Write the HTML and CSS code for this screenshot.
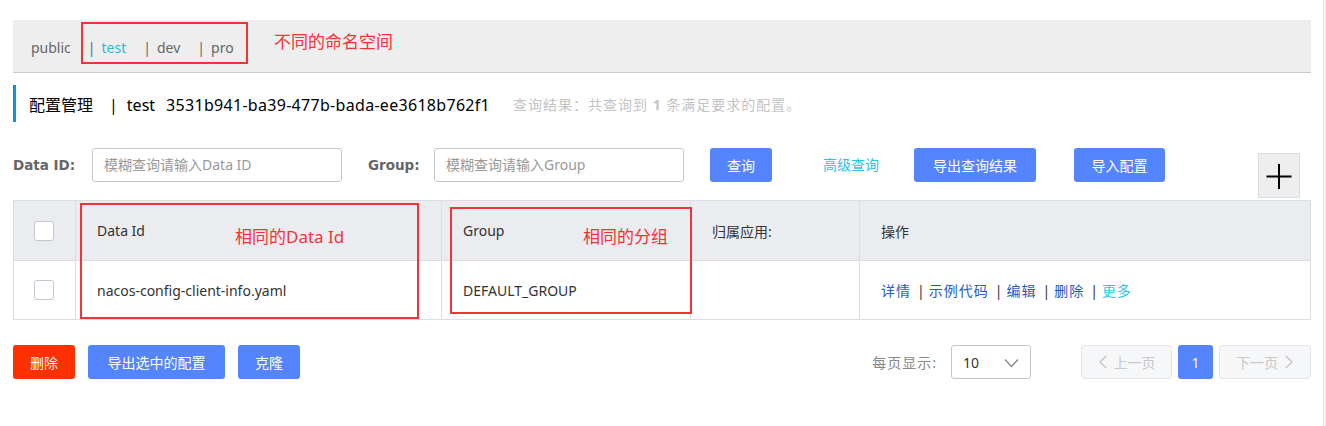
FILE: index.html
```html
<!DOCTYPE html>
<html lang="zh">
<head>
<meta charset="utf-8">
<title>配置管理</title>
<link rel="stylesheet" href="styles.css">
</head>
<body>
<div class="screen">
  <div class="page">
    <div class="ns-bar">
      <span class="ns">public</span>
      <span class="ns active"><i class="sep">|</i>test</span>
      <span class="ns"><i class="sep">|</i>dev</span>
      <span class="ns"><i class="sep">|</i>pro</span>
    </div>

    <div class="title">
      <span class="title-main">配置管理<span class="bar">|</span>test<span class="ns-id">3531b941-ba39-477b-bada-ee3618b762f1</span></span>
      <span class="result">查询结果：共查询到 <b>1</b> 条满足要求的配置。</span>
    </div>

    <div class="search">
      <label class="lbl lbl-id">Data ID:</label>
      <div class="input input-id">模糊查询请输入Data ID</div>
      <label class="lbl lbl-group">Group:</label>
      <div class="input input-group">模糊查询请输入Group</div>
      <button class="btn btn-query">查询</button>
      <span class="adv">高级查询</span>
      <button class="btn btn-export">导出查询结果</button>
      <button class="btn btn-import">导入配置</button>
      <div class="plus">
        <svg width="26" height="26" viewBox="0 0 26 26"><path d="M13 1v25M0.5 13.5h25" stroke="#000" stroke-width="2" fill="none"/></svg>
      </div>
    </div>

    <div class="grid">
      <div class="cell head chk"><span class="box"></span></div>
      <div class="cell head">Data Id</div>
      <div class="cell head">Group</div>
      <div class="cell head">归属应用:</div>
      <div class="cell head">操作</div>

      <div class="cell chk"><span class="box"></span></div>
      <div class="cell">nacos-config-client-info.yaml</div>
      <div class="cell">DEFAULT_GROUP</div>
      <div class="cell"></div>
      <div class="cell ops">
        <a>详情</a><i class="opsep">|</i><a>示例代码</a><i class="opsep">|</i><a>编辑</a><i class="opsep">|</i><a>删除</a><i class="opsep">|</i><a class="more">更多</a>
      </div>
    </div>

    <div class="footer">
      <div class="left-actions">
        <button class="btn btn-del">删除</button>
        <button class="btn btn-exp-sel">导出选中的配置</button>
        <button class="btn btn-clone">克隆</button>
      </div>
      <div class="right-actions">
        <span class="per">每页显示:</span>
        <div class="select">
          <span>10</span>
          <svg width="15" height="10" viewBox="0 0 15 10"><path d="M1 1.5l6.5 7 6.5-7" stroke="#888" stroke-width="1.4" fill="none"/></svg>
        </div>
        <div class="pager">
          <span class="pg pg-prev"><svg width="10" height="14" viewBox="0 0 10 14"><path d="M8.5 0.8L2 7l6.5 6.2" stroke="#c8c8c8" stroke-width="1.5" fill="none"/></svg>上一页</span>
          <span class="pg pg-cur">1</span>
          <span class="pg pg-next">下一页<svg width="10" height="14" viewBox="0 0 10 14"><path d="M1.5 0.8L8 7l-6.5 6.2" stroke="#c8c8c8" stroke-width="1.5" fill="none"/></svg></span>
        </div>
      </div>
    </div>

    <div class="note-box nb-ns"></div>
    <div class="note-text nt-ns">不同的命名空间</div>
    <div class="note-box nb-id"></div>
    <div class="note-text nt-id">相同的Data Id</div>
    <div class="note-box nb-group"></div>
    <div class="note-text nt-group">相同的分组</div>
  </div>
  <div class="spacer"></div>
  <div class="scrollbar"></div>
</div>
</body>
</html>
```

FILE: styles.css
```css
* { box-sizing: border-box; }
html, body { margin: 0; padding: 0; background: #fff; }
body {
  font-family: "Noto Sans", "Noto Sans CJK SC", sans-serif;
  font-size: 14px;
  color: #333;
}
.screen { display: flex; height: 426px; }
.page { position: relative; width: 1311px; padding: 20px 0 0 13px; }
.spacer { flex: 1; }
.scrollbar { width: 3px; background: #f1f1f1; border-left: 1px solid #e4e4e4; }

/* namespace bar */
.ns-bar {
  height: 53px;
  background: #eeeeee;
  border-bottom: 1px solid #cccccc;
  display: flex;
  align-items: center;
  padding: 3px 0 0 18px;
  color: #666;
  font-size: 14px;
}
.ns { margin-right: 17px; }
.ns .sep { font-style: normal; color: #666; margin-right: 6px; }
.ns.active { color: #2fb8de; }

/* title */
.title {
  margin-top: 12px;
  height: 37px;
  border-left: 3px solid #0b96d3;
  display: flex;
  align-items: center;
  padding-left: 13px;
}
.title-main { font-size: 16px; color: #000; }
.title-main .bar { margin: 0 9px 0 16px; }
.title-main .ns-id { margin-left: 11px; letter-spacing: 0.3px; }
.result { margin-left: 23px; font-size: 14px; color: #c4c4c4; letter-spacing: 1px; }
.result b { font-weight: bold; }

/* search */
.search {
  margin-top: 26px;
  height: 34px;
  display: flex;
  align-items: flex-start;
}
.lbl {
  font-family: "DejaVu Sans", sans-serif;
  font-weight: bold;
  font-size: 13.5px;
  color: #666;
  line-height: 34px;
}
.lbl-id { width: 79px; }
.lbl-group { width: 66px; margin-left: 26px; }
.input {
  width: 250px;
  height: 34px;
  border: 1px solid #c4c6cf;
  border-radius: 3px;
  padding-left: 11px;
  line-height: 32px;
  color: #999;
  font-size: 14px;
}
.btn {
  height: 34px;
  border: none;
  border-radius: 3px;
  background: #5584ff;
  color: #fff;
  font-family: inherit;
  font-size: 14px;
  padding: 0;
}
.btn-query { width: 62px; margin-left: 26px; }
.adv { margin-left: 51px; color: #33c0e5; line-height: 34px; width: 59px; }
.btn-export { width: 122px; margin-left: 32px; }
.btn-import { width: 91px; margin-left: 38px; }
.plus {
  margin-left: 93px;
  margin-top: 5px;
  width: 42px;
  height: 45px;
  background: #eeeeee;
  border: 1px solid #dddddd;
  display: flex;
  align-items: center;
  justify-content: center;
}

/* table */
.grid {
  margin-top: 18px;
  display: grid;
  grid-template-columns: 62px 366px 249px 169px 451px;
  grid-template-rows: 60px 59px;
  border-top: 1px solid #dcdee3;
  border-left: 1px solid #dcdee3;
  width: 1298px;
}
.cell {
  border-right: 1px solid #dcdee3;
  border-bottom: 1px solid #dcdee3;
  display: flex;
  align-items: center;
  padding-left: 21px;
  color: #333;
  font-size: 14px;
}
.cell.head { background: #ebecf0; }
.cell.chk { padding-left: 20px; }
.box {
  width: 20px;
  height: 20px;
  border: 1px solid #c4c6cf;
  border-radius: 3px;
  background: #fff;
}
.ops a { color: #2659c9; letter-spacing: 1px; }
.ops a.more { color: #33c6e5; }
.opsep { font-style: normal; color: #333; margin: 0 4px 0 6px; }

/* footer */
.footer {
  margin-top: 25px;
  display: flex;
  justify-content: space-between;
  width: 1298px;
}
.left-actions { display: flex; gap: 13px; }
.btn-del { width: 62px; background: #ff3000; }
.btn-exp-sel { width: 137px; }
.btn-clone { width: 62px; }
.right-actions { display: flex; align-items: center; }
.per { color: #888; font-size: 14px; margin-right: 14px; letter-spacing: 1px; }
.select {
  width: 80px;
  height: 34px;
  border: 1px solid #c4c6cf;
  border-radius: 3px;
  display: flex;
  align-items: center;
  justify-content: space-between;
  padding: 0 11px 0 11px;
  color: #333;
  font-size: 14px;
}
.select svg { margin-top: 1px; }
.pager { display: flex; margin-left: 50px; gap: 6px; }
.pg {
  height: 34px;
  border-radius: 3px;
  display: flex;
  align-items: center;
  justify-content: center;
  font-size: 14px;
}
.pg-prev, .pg-next {
  width: 92px;
  background: #f6f7f9;
  border: 1px solid #e4e6eb;
  color: #c8c8c8;
  gap: 6px;
}
.pg-prev { width: 91px; }
.pg-cur { width: 35px; background: #5584ff; color: #fff; }

/* annotations */
.note-box {
  position: absolute;
  border: 2px solid #f53336;
}
.note-text {
  position: absolute;
  color: #f53336;
  font-size: 17px;
  line-height: 20px;
}
.nb-ns { left: 81px; top: 22px; width: 167px; height: 42px; }
.nt-ns { left: 274px; top: 32px; }
.nb-id { left: 80px; top: 203px; width: 339px; height: 116px; }
.nt-id { left: 235px; top: 227px; }
.nb-group { left: 450px; top: 207px; width: 242px; height: 107px; }
.nt-group { left: 583px; top: 227px; }
```
